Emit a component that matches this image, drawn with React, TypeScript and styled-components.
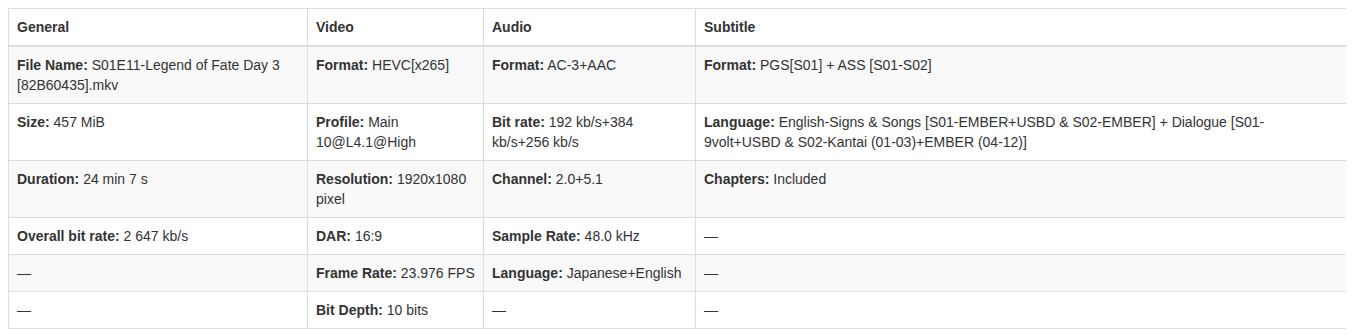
import React from "react";
import styled, { createGlobalStyle } from "styled-components";

const GlobalStyle = createGlobalStyle`
  body {
    margin: 8px;
    background: #fff;
    font-family: "Liberation Sans", Arial, sans-serif;
    font-size: 14px;
    line-height: 1.42857143;
    color: #333;
  }
`;

const Table = styled.table`
  width: 1338px;
  border-collapse: collapse;
  border-spacing: 0;
  table-layout: fixed;
  border: 1px solid #ddd;
`;

const Th = styled.th`
  text-align: left;
  font-weight: bold;
  padding: 8px;
  vertical-align: bottom;
  border: 1px solid #ddd;
  border-bottom-width: 2px;
`;

const Row = styled.tr<{ $striped: boolean }>`
  background: ${(p) => (p.$striped ? "#f9f9f9" : "#fff")};
`;

const Td = styled.td`
  padding: 8px;
  vertical-align: top;
  border: 1px solid #ddd;
`;

type Cell = [string, string] | null;

const rows: Cell[][] = [
  [
    ["File Name", "S01E11-Legend of Fate Day 3 [82B60435].mkv"],
    ["Format", "HEVC[x265]"],
    ["Format", "AC-3+AAC"],
    ["Format", "PGS[S01] + ASS [S01-S02]"],
  ],
  [
    ["Size", "457 MiB"],
    ["Profile", "Main 10@L4.1@High"],
    ["Bit rate", "192 kb/s+384 kb/s+256 kb/s"],
    [
      "Language",
      "English-Signs & Songs [S01-EMBER+USBD & S02-EMBER] + Dialogue [S01-9volt+USBD & S02-Kantai (01-03)+EMBER (04-12)]",
    ],
  ],
  [
    ["Duration", "24 min 7 s"],
    ["Resolution", "1920x1080 pixel"],
    ["Channel", "2.0+5.1"],
    ["Chapters", "Included"],
  ],
  [
    ["Overall bit rate", "2 647 kb/s"],
    ["DAR", "16:9"],
    ["Sample Rate", "48.0 kHz"],
    null,
  ],
  [null, ["Frame Rate", "23.976 FPS"], ["Language", "Japanese+English"], null],
  [null, ["Bit Depth", "10 bits"], null, null],
];

const headers = ["General", "Video", "Audio", "Subtitle"];
const widths = [299, 176, 212, 651];

export default function App() {
  return (
    <>
      <GlobalStyle />
      <Table>
        <colgroup>
          {widths.map((w, i) => (
            <col key={i} style={{ width: w }} />
          ))}
        </colgroup>
        <thead>
          <tr>
            {headers.map((h) => (
              <Th key={h}>{h}</Th>
            ))}
          </tr>
        </thead>
        <tbody>
          {rows.map((row, i) => (
            <Row key={i} $striped={i % 2 === 0}>
              {row.map((cell, j) => (
                <Td key={j}>
                  {cell ? (
                    <>
                      <strong>{cell[0]}:</strong> {cell[1]}
                    </>
                  ) : (
                    "—"
                  )}
                </Td>
              ))}
            </Row>
          ))}
        </tbody>
      </Table>
    </>
  );
}
